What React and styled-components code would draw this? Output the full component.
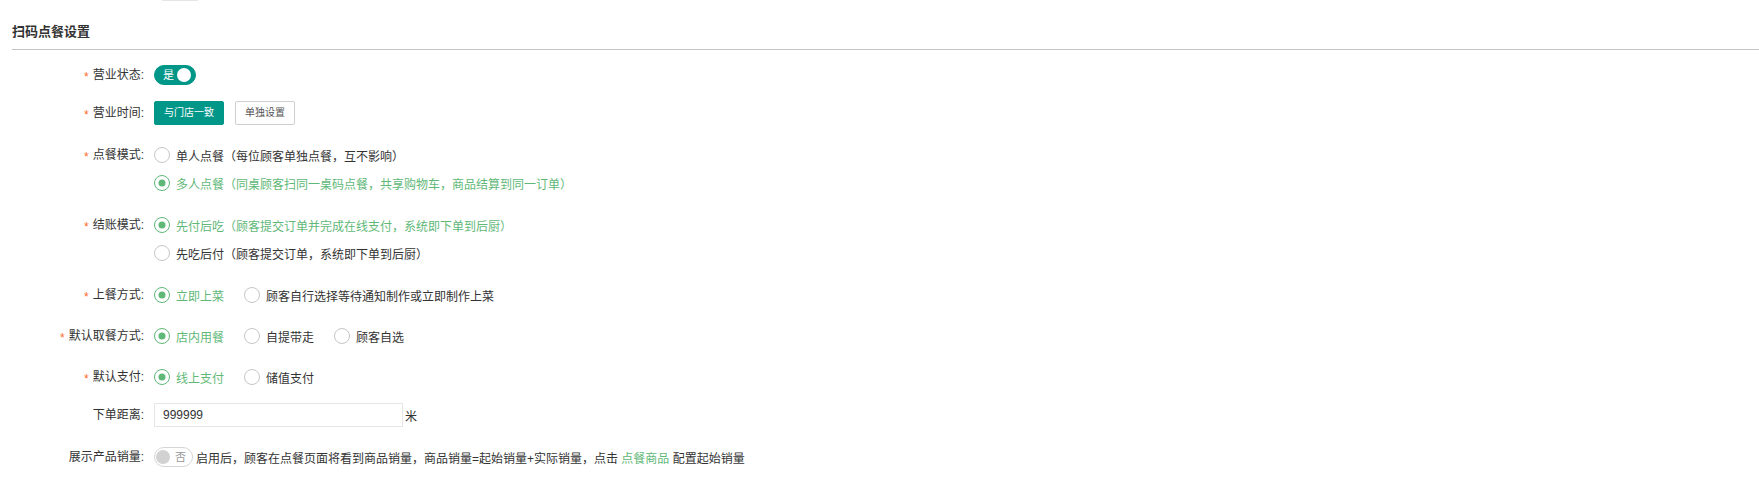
import React from 'react';
import styled, { createGlobalStyle } from 'styled-components';

const GlobalStyle = createGlobalStyle`
  html, body { margin: 0; padding: 0; background: #ffffff; }
  body {
    font-family: "Liberation Sans", "Noto Sans CJK SC", sans-serif;
    font-size: 12px;
    color: #333333;
  }
`;

const GREEN = '#5FB878';
const TEAL = '#009688';

const Page = styled.div`
  width: 1759px;
  box-sizing: border-box;
  padding-left: 12px;
`;

const TopStub = styled.div`
  width: 36px;
  height: 1px;
  margin-left: 150px;
  background: #e6e6e6;
`;

const Header = styled.div`
  padding-top: 21px;
  padding-bottom: 7px;
  border-bottom: 1px solid #c4c4c4;
`;

const Title = styled.h2`
  margin: 0;
  font-size: 13px;
  line-height: 20px;
  font-weight: bold;
  color: #333333;
`;

const Form = styled.div`
  padding-top: 11px;
`;

const Row = styled.div`
  display: flex;
  align-items: flex-start;
  margin-bottom: ${p => p.$mb || 0}px;
`;

const Label = styled.div`
  width: 142px;
  flex-shrink: 0;
  box-sizing: border-box;
  padding-right: 10px;
  text-align: right;
  line-height: 28px;
  height: 28px;
  color: #333333;
  white-space: nowrap;
`;

const Star = styled.span`
  display: inline-block;
  color: #ff6a2a;
  font-size: 12px;
  margin-right: 4px;
  transform: translateY(2px);
`;

const Control = styled.div`
  display: flex;
  flex-direction: column;
`;

const Line = styled.div`
  display: flex;
  align-items: center;
  height: 28px;
`;

const Option = styled.label`
  display: inline-flex;
  align-items: center;
  margin-right: 20px;
  color: ${p => (p.$checked ? GREEN : '#333333')};
  white-space: nowrap;
  cursor: pointer;
`;

const RadioIcon = styled.span`
  position: relative;
  width: 16px;
  height: 16px;
  box-sizing: border-box;
  border-radius: 50%;
  border: 1.5px solid ${p => (p.$checked ? GREEN : '#c6c6c6')};
  margin-right: 6px;
  flex-shrink: 0;
  &::after {
    content: '';
    display: ${p => (p.$checked ? 'block' : 'none')};
    position: absolute;
    left: 50%;
    top: 50%;
    width: 7px;
    height: 7px;
    border-radius: 50%;
    background: ${GREEN};
    transform: translate(-50%, -50%);
  }
`;

const Switch = styled.span`
  display: inline-flex;
  align-items: center;
  justify-content: space-between;
  flex-direction: ${p => (p.$on ? 'row' : 'row-reverse')};
  box-sizing: border-box;
  width: ${p => (p.$on ? 42 : 39)}px;
  height: 20px;
  border-radius: 11px;
  border: 1px solid ${p => (p.$on ? TEAL : '#d6d6d6')};
  background: ${p => (p.$on ? TEAL : '#ffffff')};
  padding: ${p => (p.$on ? '0 4px 0 8px' : '0 6px 0 1px')};
  flex-shrink: 0;
`;

const SwitchText = styled.em`
  font-style: normal;
  font-size: 11px;
  line-height: 1;
  color: ${p => (p.$on ? '#ffffff' : '#999999')};
`;

const Knob = styled.i`
  display: block;
  width: 14px;
  height: 14px;
  border-radius: 50%;
  background: ${p => (p.$on ? '#ffffff' : '#d2d2d2')};
`;

const Button = styled.button`
  height: 24px;
  padding: 0 9px;
  margin-right: 11px;
  border-radius: 2px;
  font-family: inherit;
  font-size: 10px;
  line-height: 22px;
  cursor: pointer;
  border: 1px solid ${p => (p.$primary ? TEAL : '#cfcfcf')};
  background: ${p => (p.$primary ? TEAL : '#ffffff')};
  color: ${p => (p.$primary ? '#ffffff' : '#555555')};
`;

const Input = styled.input`
  width: 249px;
  height: 24px;
  box-sizing: border-box;
  border: 1px solid #e6e6e6;
  padding: 0 8px;
  font-family: inherit;
  font-size: 12px;
  color: #333333;
  outline: none;
`;

const Unit = styled.span`
  margin-left: 2px;
  color: #333333;
`;

const Hint = styled.span`
  margin-left: 3px;
  color: #333333;
  white-space: nowrap;
`;

const Link = styled.a`
  color: ${GREEN};
  text-decoration: none;
`;

const Radio = ({ checked, children }) => (
  <Option $checked={checked}>
    <RadioIcon $checked={checked} />
    {children}
  </Option>
);

const FieldLabel = ({ required, children }) => (
  <Label>
    {required && <Star>*</Star>}
    {children}
  </Label>
);

export default function App() {
  return (
    <Page>
      <GlobalStyle />
      <TopStub />
      <Header>
        <Title>扫码点餐设置</Title>
      </Header>
      <Form>
        <Row $mb={10}>
          <FieldLabel required>营业状态:</FieldLabel>
          <Control>
            <Line>
              <Switch $on>
                <SwitchText $on>是</SwitchText>
                <Knob $on />
              </Switch>
            </Line>
          </Control>
        </Row>
        <Row $mb={14}>
          <FieldLabel required>营业时间:</FieldLabel>
          <Control>
            <Line>
              <Button $primary>与门店一致</Button>
              <Button>单独设置</Button>
            </Line>
          </Control>
        </Row>
        <Row $mb={14}>
          <FieldLabel required>点餐模式:</FieldLabel>
          <Control>
            <Line>
              <Radio>单人点餐（每位顾客单独点餐，互不影响）</Radio>
            </Line>
            <Line>
              <Radio checked>多人点餐（同桌顾客扫同一桌码点餐，共享购物车，商品结算到同一订单）</Radio>
            </Line>
          </Control>
        </Row>
        <Row $mb={14}>
          <FieldLabel required>结账模式:</FieldLabel>
          <Control>
            <Line>
              <Radio checked>先付后吃（顾客提交订单并完成在线支付，系统即下单到后厨）</Radio>
            </Line>
            <Line>
              <Radio>先吃后付（顾客提交订单，系统即下单到后厨）</Radio>
            </Line>
          </Control>
        </Row>
        <Row $mb={13}>
          <FieldLabel required>上餐方式:</FieldLabel>
          <Control>
            <Line>
              <Radio checked>立即上菜</Radio>
              <Radio>顾客自行选择等待通知制作或立即制作上菜</Radio>
            </Line>
          </Control>
        </Row>
        <Row $mb={13}>
          <FieldLabel required>默认取餐方式:</FieldLabel>
          <Control>
            <Line>
              <Radio checked>店内用餐</Radio>
              <Radio>自提带走</Radio>
              <Radio>顾客自选</Radio>
            </Line>
          </Control>
        </Row>
        <Row $mb={10}>
          <FieldLabel required>默认支付:</FieldLabel>
          <Control>
            <Line>
              <Radio checked>线上支付</Radio>
              <Radio>储值支付</Radio>
            </Line>
          </Control>
        </Row>
        <Row $mb={14}>
          <FieldLabel>下单距离:</FieldLabel>
          <Control>
            <Line>
              <Input defaultValue="999999" />
              <Unit>米</Unit>
            </Line>
          </Control>
        </Row>
        <Row>
          <FieldLabel>展示产品销量:</FieldLabel>
          <Control>
            <Line>
              <Switch>
                <SwitchText>否</SwitchText>
                <Knob />
              </Switch>
              <Hint>
                启用后，顾客在点餐页面将看到商品销量，商品销量=起始销量+实际销量，点击 <Link href="#">点餐商品</Link> 配置起始销量
              </Hint>
            </Line>
          </Control>
        </Row>
      </Form>
    </Page>
  );
}
